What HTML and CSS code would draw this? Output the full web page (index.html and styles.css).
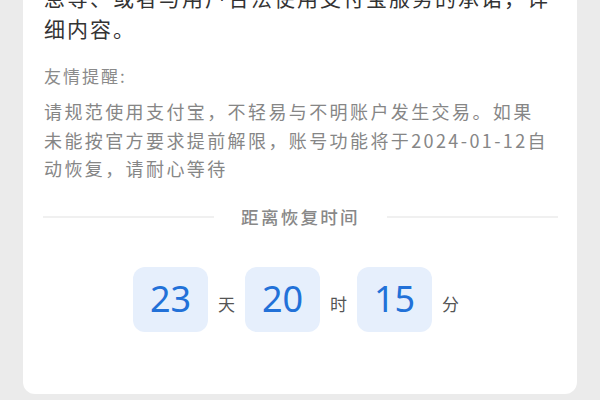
FILE: index.html
```html
<!DOCTYPE html>
<html lang="zh-CN">
<head>
<meta charset="utf-8">
<title>账户限制</title>
<link rel="stylesheet" href="styles.css">
</head>
<body>
<main class="card">
  <p class="lead">息等、或者与用户合法使用支付宝服务的承诺，详<br>细内容。</p>
  <h2 class="tip-title">友情提醒:</h2>
  <p class="tip-body">请规范使用支付宝，不轻易与不明账户发生交易。如果<br>未能按官方要求提前解限，账号功能将于2024-01-12自<br>动恢复，请耐心等待</p>
  <div class="divider"><span class="divider-line"></span><span class="divider-text">距离恢复时间</span><span class="divider-line"></span></div>
  <div class="countdown">
    <span class="num">23</span><span class="unit">天</span>
    <span class="num">20</span><span class="unit">时</span>
    <span class="num">15</span><span class="unit">分</span>
  </div>
</main>
</body>
</html>
```
FILE: styles.css
```css
html, body {
  margin: 0;
  padding: 0;
  background: #ebebeb;
  height: 400px;
  overflow: hidden;
}
body {
  padding: 0 23px;
  font-family: "Noto Sans CJK SC", "Noto Sans", sans-serif;
}
.card {
  background: #ffffff;
  border-radius: 12px;
  margin-top: -60px;
  padding: 42px 19px 62px 21px;
}
.lead {
  margin: 0;
  font-size: 21px;
  letter-spacing: 2px;
  line-height: 31px;
  color: #333333;
  white-space: nowrap;
}
.tip-title {
  margin: 18px 0 0;
  font-size: 17px;
  font-weight: 400;
  letter-spacing: 2px;
  line-height: 28px;
  color: #8a8a8a;
}
.tip-body {
  margin: 7px 0 0;
  font-size: 18px;
  letter-spacing: 2.4px;
  line-height: 28.5px;
  color: #868686;
  white-space: nowrap;
}
.divider {
  display: flex;
  align-items: center;
  margin: 22px 0 0 -1px;
  height: 24px;
}
.divider-line {
  flex: 1;
  height: 2px;
  background: #f0f0f0;
}
.divider-text {
  margin: 0 27px;
  font-size: 17.5px;
  font-weight: 500;
  letter-spacing: 2.3px;
  color: #888888;
  line-height: 24px;
}
.countdown {
  display: flex;
  justify-content: center;
  align-items: center;
  margin-top: 38px;
}
.num {
  display: flex;
  align-items: center;
  justify-content: center;
  width: 75px;
  height: 65px;
  border-radius: 12px;
  background: #e6effc;
  color: #2271d8;
  font-family: "Noto Sans", sans-serif;
  font-size: 36px;
  line-height: 1;
}
.unit {
  margin: 9px 10px 0;
  font-size: 17px;
  color: #555555;
}
```
